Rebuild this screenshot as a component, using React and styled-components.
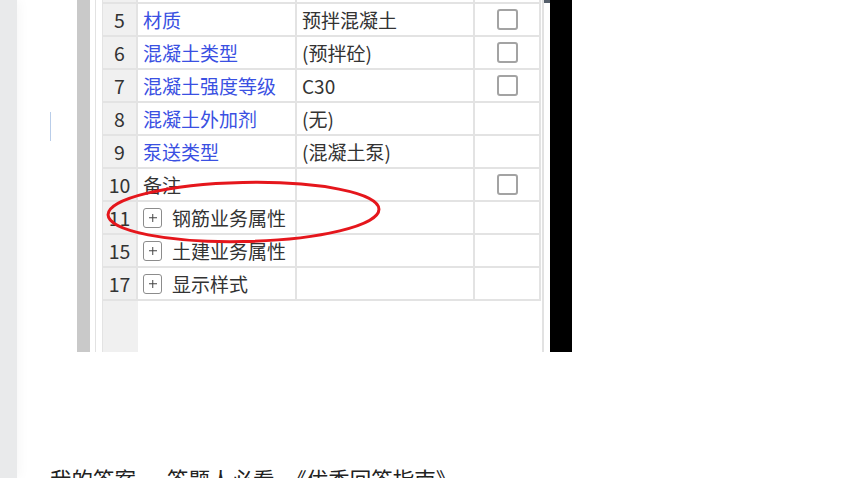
import React from 'react'
import styled, {createGlobalStyle} from 'styled-components'

const GlobalStyle = createGlobalStyle`
  html, body {
    margin: 0;
    padding: 0;
    background: #fff;
    overflow: hidden;
  }

  body {
    width: 845px;
    height: 478px;
    font-family: "Noto Sans CJK SC", "Noto Sans", sans-serif;
  }
`

const line = '#e3e3e3'

const rows = [
  {no: 5, name: '材质', value: '预拌混凝土', link: true, check: true},
  {no: 6, name: '混凝土类型', value: '(预拌砼)', link: true, check: true},
  {no: 7, name: '混凝土强度等级', value: 'C30', link: true, check: true},
  {no: 8, name: '混凝土外加剂', value: '(无)', link: true},
  {no: 9, name: '泵送类型', value: '(混凝土泵)', link: true},
  {no: 10, name: '备注', value: '', check: true},
  {no: 11, name: '钢筋业务属性', group: true},
  {no: 15, name: '土建业务属性', group: true},
  {no: 17, name: '显示样式', group: true},
]

const Page = styled.div`
  display: flex;
  height: 478px;
  overflow: hidden;
`

const SideStrip = styled.div`
  width: 17px;
  flex-shrink: 0;
  background: #e9eaeb;
  box-shadow: 3px 0 12px rgba(0, 0, 0, 0.035);
`

const Editor = styled.div`
  flex: 1;
  display: flex;
  flex-direction: column;
  padding-left: 33px;
`

const FirstLine = styled.div`
  display: flex;
  align-items: flex-start;
`

const Caret = styled.span`
  width: 1px;
  height: 29px;
  margin-top: 112px;
  background: #b9cde9;
`

// the pasted screenshot of the property grid
const Shot = styled.div`
  position: relative;
  display: flex;
  height: 352px;
  margin-left: 26px;
  overflow: hidden;
`

const ScrollTrack = styled.div`
  width: 13px;
  background: #c9c9c9;
`

const Gutter = styled.div`
  width: 12px;
  display: flex;

  &::before {
    content: '';
    width: 1px;
    margin-left: 5px;
    background: #e2e2e2;
  }
`

const Grid = styled.div`
  display: flex;
  flex-direction: column;
  width: 439px;
  border-left: 1px solid ${line};
  box-sizing: border-box;
`

const Row = styled.div`
  display: grid;
  grid-template-columns: 35px 159px 178px 66px;
  height: ${props => props.$height || 33}px;
  flex-shrink: 0;
`

const Cell = styled.div`
  display: flex;
  align-items: center;
  justify-content: ${props => props.$center ? 'center' : 'flex-start'};
  padding: 0 ${props => props.$center ? 0 : 5}px;
  border-right: 2px solid ${line};
  border-bottom: 2px solid ${line};
  background: ${props => props.$head ? '#f0f0f0' : '#fff'};
  color: ${props => props.$link ? '#3a50e2' : '#333'};
  font-size: ${props => props.$head ? 19.5 : 19}px;
  white-space: nowrap;
  overflow: hidden;
  box-sizing: border-box;
`

const Filler = styled.div`
  flex: 1;
  display: grid;
  grid-template-columns: 35px 1fr;
`

const FillerHead = styled.div`
  background: #f0f0f0;
`

const CheckBox = styled.span`
  width: 21px;
  height: 21px;
  border: 2px solid #a3a3a3;
  border-radius: 3px;
  box-sizing: border-box;
  background: #fff;
`

const PlusBox = styled.span`
  position: relative;
  width: 19px;
  height: 20px;
  margin: 0 10px 0 0;
  border: 1.5px solid #8c8c8c;
  border-radius: 3px;
  box-sizing: border-box;
  flex-shrink: 0;

  &::before, &::after {
    content: '';
    position: absolute;
    left: 50%;
    top: 50%;
    background: #444;
    transform: translate(-50%, -50%);
  }

  &::before {
    width: 8px;
    height: 1.5px;
  }

  &::after {
    width: 1.5px;
    height: 8px;
  }
`

const RightPad = styled.div`
  width: 9px;
  display: flex;
  padding-left: 1px;
  box-sizing: border-box;
`

const RightLine = styled.div`
  flex: 1;
  border-left: 2px solid #e2e2e2;
  display: flex;
  flex-direction: column;
  align-items: flex-end;
`

const ScrollThumb = styled.span`
  width: 6px;
  height: 3px;
  background: #56606c;
`

const BlackEdge = styled.div`
  width: 22px;
  background: #000;
`

const Mark = styled.svg`
  position: absolute;
  left: 0;
  top: 0;
  width: 100%;
  height: 100%;
  pointer-events: none;
`

const Answer = styled.div`
  margin-top: 112px;
  font-size: 21.5px;
  line-height: 30px;
  color: #222;
  white-space: nowrap;
`

const Hint = styled.span`
  margin-left: 31px;
`

const GridRow = ({item}) => (
  <Row>
    <Cell $head $center>{item.no}</Cell>
    <Cell $link={item.link}>
      {item.group && <PlusBox />}
      {item.name}
    </Cell>
    <Cell>{item.value}</Cell>
    <Cell $center>{item.check && <CheckBox />}</Cell>
  </Row>
)

export default function App() {
  return (
    <>
      <GlobalStyle />
      <Page>
        <SideStrip />
        <Editor>
          <FirstLine>
            <Caret />
            <Shot>
              <ScrollTrack />
              <Gutter />
              <Grid>
                <Row $height={4}>
                  <Cell $head />
                  <Cell />
                  <Cell />
                  <Cell />
                </Row>
                {rows.map(item => <GridRow key={item.no} item={item} />)}
                <Filler>
                  <FillerHead />
                </Filler>
              </Grid>
              <RightPad>
                <RightLine>
                  <ScrollThumb />
                </RightLine>
              </RightPad>
              <BlackEdge />
              <Mark viewBox='0 0 495 352'>
                <ellipse cx='166.5' cy='212' rx='135.5' ry='29.5'
                  fill='none' stroke='#e5161c' strokeWidth='3'
                  transform='rotate(-1.2 166.5 212)' />
              </Mark>
            </Shot>
          </FirstLine>
          <Answer>
            我的答案<Hint>答题人必看，《优秀回答指南》</Hint>
          </Answer>
        </Editor>
      </Page>
    </>
  )
}
